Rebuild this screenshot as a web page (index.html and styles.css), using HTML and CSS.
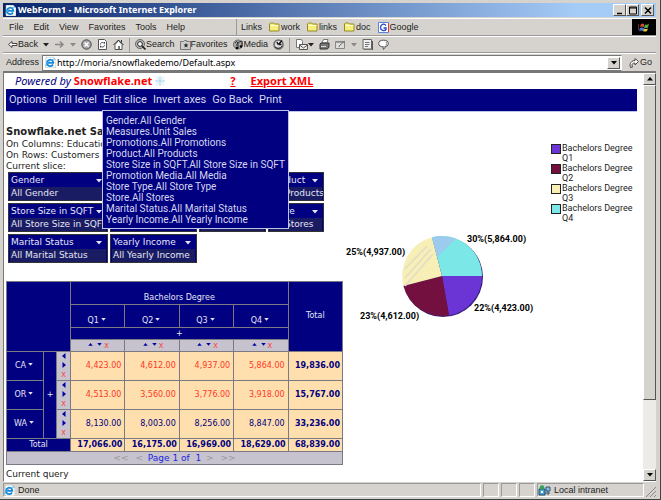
FILE: index.html
```html
<!DOCTYPE html>
<html lang="en">
<head>
<meta charset="utf-8">
<title>WebForm1 - Microsoft Internet Explorer</title>
<link rel="stylesheet" href="styles.css">
</head>
<body>
<svg class="defs" aria-hidden="true">
  <symbol id="ie" viewBox="0 0 11 11"><path d="M1 0h7l3 3v8H1z" fill="#fff" stroke="#9aa" stroke-width=".6"/><path d="M8 7.500A3.200 3.200 0 1 1 8.400 5.800H3" fill="none" stroke="#1688d8" stroke-width="1.700"/><path d="M1 9C0 7 6 2 10 2" fill="none" stroke="#48b0f0"/></symbol>
  <symbol id="folder" viewBox="0 0 11 10"><path d="M.5 1.500 1.500.5h3l1 1h4.500v7H.5z" fill="#f7ef7b" stroke="#948a29"/><path d="M1.500 3h8" stroke="#fffbd0"/></symbol>
  <symbol id="down" viewBox="0 0 6 4"><path d="M0 0h6L3 3.500z" fill="currentColor"/></symbol>
  <symbol id="up" viewBox="0 0 6 4"><path d="M0 3.500h6L3 0z" fill="currentColor"/></symbol>
  <symbol id="left" viewBox="0 0 4 6"><path d="M3.500 0v6L0 3z" fill="currentColor"/></symbol>
  <symbol id="right" viewBox="0 0 4 6"><path d="M.5 0v6L4 3z" fill="currentColor"/></symbol>
</svg>
<div class="window">
  <header class="titlebar">
    <svg class="icon"><use href="#ie"/></svg>
    <h1>WebForm1 - Microsoft Internet Explorer</h1>
    <button class="box" aria-label="Minimize"><svg viewBox="0 0 10 9"><path d="M2 7.500h5" stroke="#000" stroke-width="1.500"/></svg></button>
    <button class="box" aria-label="Maximize"><svg viewBox="0 0 10 9"><path d="M1.500 1h7v7h-7z M1.500 2h7" fill="none" stroke="#000"/></svg></button>
    <button class="box close" aria-label="Close"><svg viewBox="0 0 10 9"><path d="m2 1.500 6 6m0-6-6 6" stroke="#000" stroke-width="1.500"/></svg></button>
  </header>

  <div class="menubar">
    <nav class="menus"><button>File</button><button>Edit</button><button>View</button><button>Favorites</button><button>Tools</button><button>Help</button></nav>
    <div class="links"><span>Links</span>
      <a href="#"><svg class="icon"><use href="#folder"/></svg>work</a>
      <a href="#"><svg class="icon"><use href="#folder"/></svg>links</a>
      <a href="#"><svg class="icon"><use href="#folder"/></svg>doc</a>
      <a href="#"><svg class="icon" viewBox="0 0 11 11"><path d="M.5.5h10v10H.5z" fill="#fff" stroke="#5b83d8"/><path d="M10.500 1v9" stroke="#e33"/><path d="M8 3.500C6 1 2.500 2.500 2.500 5.500S6.500 9.500 8 7.500V6H5.500" fill="none" stroke="#2445c8" stroke-width="1.300"/></svg>Google</a>
    </div>
    <div class="throbber"><svg viewBox="0 0 12 11"><path d="M3 2q2-1 3 0v3q-2-1-4 0z" fill="#d84c34"/><path d="M7 2.500q2 1 4-1l-1 4q-2 1-4 0z" fill="#55a848"/><path d="M2 6q2-1 4 0L5 9q-2-1-4 0z" fill="#4979d8"/><path d="M6 6.500q2 1 4 0L9 9q-2 1-4 0z" fill="#e6c442"/><path d="M0 3h1M0 5h1M0 7h1" stroke="#c55"/></svg></div>
  </div>

  <div class="toolbar">
    <button><svg class="icon" viewBox="0 0 11 11"><path d="M5 2.500 1.500 5.500 5 8.500V6.500h5v-2H5z" fill="#fff" stroke="#444"/></svg>Back</button>
    <button class="drop" aria-label="Back history"><svg class="arrow"><use href="#down"/></svg></button>
    <button aria-label="Forward"><svg class="icon" viewBox="0 0 11 11"><path d="M1 5.500h8M6 2.500l3 3-3 3" fill="none" stroke="#888" stroke-width="1.400"/></svg></button>
    <button class="drop dim" aria-label="Forward history"><svg class="arrow"><use href="#down"/></svg></button>
    <button aria-label="Stop"><svg class="icon" viewBox="0 0 11 11"><circle cx="5.500" cy="5.500" r="4.700" fill="#aaa" stroke="#444"/><path d="m3.500 3.500 4 4m0-4-4 4" stroke="#fff" stroke-width="1.500"/></svg></button>
    <button aria-label="Refresh"><svg class="icon" viewBox="0 0 11 11"><path d="M1.500.5h6l2 2v8h-8z" fill="#fff" stroke="#555"/><path d="M3.500 5.500C3.500 3 6 3 7.500 4.500V3M7.500 6C7 8.500 5 8.500 3.500 7v1.500" fill="none" stroke="#444"/></svg></button>
    <button aria-label="Home"><svg class="icon" viewBox="0 0 11 11"><path d="M2 10.500V5.500L5.500 1.500 9 5.500v5z" fill="#fff" stroke="#555"/><path d="m.5 6 5-5 5 5M8.500 1v2.500" fill="none" stroke="#333"/><path d="M5 7h2v3H5z" fill="#777"/></svg></button>
    <i class="sep"></i>
    <button><svg class="icon" viewBox="0 0 11 11"><circle cx="5" cy="5" r="4.500" fill="#bbb" stroke="#666"/><circle cx="5" cy="5" r="2.400" fill="#fff" stroke="#222"/><path d="m7 7 3.500 3.500" stroke="#222" stroke-width="1.600"/></svg>Search</button>
    <button><svg class="icon" viewBox="0 0 11 11"><path d="M.5 2.500h3l1-1h2v1h4v8H.5z" fill="#ccc" stroke="#777"/><path d="m6 4 .7 1.500h1.800L7 6.700l.7 1.800L6 7.500 4.300 8.500 5 6.700 3.500 5.500h1.800z" fill="#222"/></svg>Favorites</button>
    <button><svg class="icon" viewBox="0 0 11 11"><circle cx="5" cy="5.500" r="4.500" fill="#aaa" stroke="#666"/><path d="M2 4q2-3 3 0-2 1-1 3M5 9V3.500l4-1.500v5" fill="none" stroke="#333"/><circle cx="4" cy="9" r="1.300"/><circle cx="8" cy="7.500" r="1.300"/></svg>Media</button>
    <button aria-label="History"><svg class="icon" viewBox="0 0 11 11"><circle cx="5.500" cy="5.500" r="4.500" fill="#ddd" stroke="#666" stroke-width="1.500"/><path d="M5.500 5.500 9 1.500M5.500 5.500h3M5 5.500 4 3" stroke="#111" stroke-width="1.400"/><path d="M2 8q4 3 7-1" fill="none" stroke="#222"/></svg></button>
    <i class="sep"></i>
    <button aria-label="Mail"><svg class="icon wide" viewBox="0 0 13 11"><path d="M1.500.5h5l1 2v6h-6z" fill="#fff" stroke="#777"/><path d="M4.500 5.500h8v5h-8z" fill="#eee" stroke="#555"/><path d="m4.500 6 4 3 4-3" fill="none" stroke="#555"/></svg><svg class="arrow"><use href="#down"/></svg></button>
    <button aria-label="Print"><svg class="icon" viewBox="0 0 11 11"><path d="m3 4 1.500-3.500H9L8 4z" fill="#fff" stroke="#777"/><path d="M1 5l1-1h8v4L8.500 10H1z" fill="#777" stroke="#333"/><path d="M2 7.500h5" stroke="#ddd"/></svg></button>
    <button class="dim" aria-label="Edit"><svg class="icon" viewBox="0 0 11 11"><path d="M.5 2.500h9v7h-9z" fill="#ddd" stroke="#888"/><path d="M1 3h9" stroke="#888" stroke-width="1.500"/><path d="m4 8 1-2 5-4" fill="none" stroke="#777"/></svg></button>
    <button class="drop dim" aria-label="Edit with"><svg class="arrow"><use href="#down"/></svg></button>
    <button aria-label="Discuss"><svg class="icon" viewBox="0 0 11 11"><path d="M1 .5h8.500v9.500H1z" fill="#eee" stroke="#666"/><path d="M10.500 2v9H2" fill="none" stroke="#555"/><path d="M3 3.500h4.500M3 5.500h4.500M3 7.500h3" stroke="#777"/></svg></button>
    <button aria-label="Messenger"><svg class="icon" viewBox="0 0 11 11"><ellipse cx="5.500" cy="4.500" rx="4.800" ry="3.300" fill="#fff" stroke="#555"/><path d="m5 8 .5 2.500L8 7" fill="#fff" stroke="#555"/><path d="M8 2.500q1.500 2 0 4" fill="none" stroke="#888"/></svg></button>
  </div>

  <form class="address">
    <label for="url">Address</label>
    <div class="field"><svg class="icon"><use href="#ie"/></svg><input id="url" value="http://moria/snowflakedemo/Default.aspx"><button type="button" class="box" aria-label="Show addresses"><svg class="arrow"><use href="#down"/></svg></button></div>
    <button type="button" class="go"><svg class="icon" viewBox="0 0 11 11"><path d="M1.500 10.500C0 6 3 3.500 6 3.500V1.500l3.500 3L6 8V6C4 6 2 7 3.500 10z" fill="#fff" stroke="#444"/></svg>Go</button>
  </form>

  <div class="viewport">
    <main class="page">
      <div class="brand"><em>Powered by</em> <strong>Snowflake.net</strong><svg class="flake" viewBox="0 0 11 11"><path d="M5.500 0v11M0 5.500h11M1.500 1.500l8 8m0-8-8 8M4 1l1.500 1.500L7 1M4 10l1.500-1.500L7 10M1 4l1.500 1.500L1 7M10 4 8.500 5.500 10 7" fill="none" stroke="#a5d3e7" stroke-width=".8"/></svg>
        <a class="help" href="#">?</a><a href="#">Export XML</a></div>
      <nav class="nav">
        <button>Options</button><button>Drill level</button>
        <div class="open"><button aria-expanded="true">Edit slice</button>
          <ul class="menu"><li>Gender.All Gender</li><li>Measures.Unit Sales</li><li>Promotions.All Promotions</li><li>Product.All Products</li><li>Store Size in SQFT.All Store Size in SQFT</li><li>Promotion Media.All Media</li><li>Store Type.All Store Type</li><li>Store.All Stores</li><li>Marital Status.All Marital Status</li><li>Yearly Income.All Yearly Income</li></ul></div>
        <button>Invert axes</button><button>Go Back</button><button>Print</button>
      </nav>
      <div class="report">
        <section class="data">
          <h2>Snowflake.net Sa</h2>
          <p>On Columns: Educatio</p><p>On Rows: Customers</p><p>Current slice:</p>
          <div class="slices">
            <div class="slice"><button>Gender<svg class="arrow"><use href="#down"/></svg></button><span>All Gender</span></div>
            <div class="slice"></div>
            <div class="slice"></div>
            <div class="slice"><button>Product<svg class="arrow"><use href="#down"/></svg></button><span>All Products</span></div>
            <div class="slice"><button>Store Size in SQFT<svg class="arrow"><use href="#down"/></svg></button><span>All Store Size in SQFT</span></div>
            <div class="slice"></div>
            <div class="slice"><button>Store Type<svg class="arrow"><use href="#down"/></svg></button><span>All Store Type</span></div>
            <div class="slice"><button>Store<svg class="arrow"><use href="#down"/></svg></button><span>All Stores</span></div>
            <div class="slice"><button>Marital Status<svg class="arrow"><use href="#down"/></svg></button><span>All Marital Status</span></div>
            <div class="slice"><button>Yearly Income<svg class="arrow"><use href="#down"/></svg></button><span>All Yearly Income</span></div>
          </div>
          <table class="pivot">
            <colgroup><col class="c-name"><col class="c-plus"><col class="c-move"><col span="5"></colgroup>
            <thead>
              <tr class="level"><th colspan="3" rowspan="4"></th><th colspan="4">Bachelors Degree</th><th rowspan="4" class="total">Total</th></tr>
              <tr class="level"><th>Q1<svg class="arrow"><use href="#down"/></svg></th><th>Q2<svg class="arrow"><use href="#down"/></svg></th><th>Q3<svg class="arrow"><use href="#down"/></svg></th><th>Q4<svg class="arrow"><use href="#down"/></svg></th></tr>
              <tr class="short"><th colspan="4">+</th></tr>
              <tr class="short tools"><td><svg class="arrow"><use href="#up"/></svg><svg class="arrow"><use href="#down"/></svg><b>x</b></td><td><svg class="arrow"><use href="#up"/></svg><svg class="arrow"><use href="#down"/></svg><b>x</b></td><td><svg class="arrow"><use href="#up"/></svg><svg class="arrow"><use href="#down"/></svg><b>x</b></td><td><svg class="arrow"><use href="#up"/></svg><svg class="arrow"><use href="#down"/></svg><b>x</b></td></tr>
            </thead>
            <tbody>
              <tr class="red"><th>CA<svg class="arrow"><use href="#down"/></svg></th><th rowspan="3">+</th><td class="move"><svg><use href="#left"/></svg><svg><use href="#right"/></svg><b>x</b></td><td>4,423.00</td><td>4,612.00</td><td>4,937.00</td><td>5,864.00</td><td class="sum">19,836.00</td></tr>
              <tr class="red"><th>OR<svg class="arrow"><use href="#down"/></svg></th><td class="move"><svg><use href="#left"/></svg><svg><use href="#right"/></svg><b>x</b></td><td>4,513.00</td><td>3,560.00</td><td>3,776.00</td><td>3,918.00</td><td class="sum">15,767.00</td></tr>
              <tr><th>WA<svg class="arrow"><use href="#down"/></svg></th><td class="move"><svg><use href="#left"/></svg><svg><use href="#right"/></svg><b>x</b></td><td>8,130.00</td><td>8,003.00</td><td>8,256.00</td><td>8,847.00</td><td class="sum">33,236.00</td></tr>
            </tbody>
            <tfoot>
              <tr><th colspan="3">Total</th><td class="sum">17,066.00</td><td class="sum">16,175.00</td><td class="sum">16,969.00</td><td class="sum">18,629.00</td><td class="sum">68,839.00</td></tr>
              <tr><td class="pager" colspan="8"><i>&lt;&lt;</i> <i>&lt;</i> Page 1 of&nbsp; 1 <i>&gt;</i> <i>&gt;&gt;</i></td></tr>
            </tfoot>
          </table>
          <p class="query">Current query</p>
        </section>
        <figure class="chart">
          <svg viewBox="0 0 180 100" role="img" aria-label="Sales by quarter">
            <circle cx="97" cy="47" r="40" fill="#342078"/>
            <path d="M96 46h40A40 40 0 0 1 103 85.400z" fill="#6b35d6"/>
            <path d="M96 46 103 85.400A40 40 0 0 1 57.400 56z" fill="#731040"/>
            <path d="M96 46 57.400 56A40 40 0 0 1 86 7.300z" fill="#f7efb5"/>
            <path d="M96 46 86 7.300A40 40 0 0 1 136 46z" fill="#7be7e7"/>
            <path d="M91 27 86 7.300A40 40 0 0 1 110 8.500z" fill="#9ccbee"/>
            <path d="m59 39 22-23m-22 32 26-29m-26 37 28-32" stroke="#e2dcc9" stroke-width="1.500"/>
            <text x="121" y="12">30%(5,864.00)</text><text x="0" y="25">25%(4,937.00)</text><text x="14" y="89">23%(4,612.00)</text><text x="128" y="81">22%(4,423.00)</text>
          </svg>
          <ul class="legend"><li class="q1">Bachelors Degree Q1</li><li class="q2">Bachelors Degree Q2</li><li class="q3">Bachelors Degree Q3</li><li class="q4">Bachelors Degree Q4</li></ul>
        </figure>
      </div>
    </main>
    <div class="scroll"><button class="box" aria-label="Scroll up"><svg class="arrow"><use href="#up"/></svg></button><i class="thumb"></i><i class="track"></i><button class="box" aria-label="Scroll down"><svg class="arrow"><use href="#down"/></svg></button></div>
  </div>

  <footer class="status">
    <span class="done"><svg class="icon"><use href="#ie"/></svg>Done</span><span></span><span></span><span></span>
    <span class="zone"><svg class="icon wide" viewBox="0 0 13 11"><path d="M1 4h6v6H1z" fill="#4ba9da" stroke="#246"/><path d="M8 2h4v4H8zM7 8h5M10 6v4" fill="#7bc2ee" stroke="#357"/><circle cx="4" cy="2.500" r="2.300" fill="#35a35a"/><path d="M3 6h2v2H3z" fill="#fff"/></svg>Local intranet</span>
    <svg class="grip" viewBox="0 0 10 10"><path d="m0 10 10-10M4 10l6-6M8 10l2-2" stroke="#888"/></svg>
  </footer>
</div>
</body>
</html>
```
FILE: styles.css
```css
* { box-sizing: border-box; }
body { margin: 0; background: #d6d3ce; font: 9px/11px "Liberation Sans", sans-serif; color: #222; }
button { border: 0; padding: 0; background: none; color: inherit; font: inherit; display: flex; align-items: center; }
a { color: inherit; text-decoration: none; }
h1, h2, p, ul, figure { margin: 0; padding: 0; list-style: none; }
.defs { display: none; }
.icon { width: 11px; height: 11px; flex: none; }
.wide { width: 13px; }
.arrow { width: 6px; height: 4px; flex: none; }
.window { height: 100vh; display: flex; flex-direction: column; padding: 3px 4px 2px 3px; border-right: 1px solid #424142; border-bottom: 1px solid #424142; overflow: hidden; }
.titlebar { display: flex; align-items: center; height: 14px; flex: none; padding: 0 2px; background: linear-gradient(90deg, #08246b, #a5cbf7 88%); color: #fff; }
.titlebar h1 { flex: 1; margin-left: 2px; font: bold 9px/14px "Noto Sans", sans-serif; }
.box { justify-content: center; width: 13px; height: 12px; flex: none; background: #d6d3ce; border: 1px solid; border-color: #fff #555 #555 #fff; color: #000; }
.titlebar .box svg { width: 10px; height: 9px; }
.close { margin-left: 2px; }
.menubar { display: flex; height: 18px; flex: none; margin-top: 1px; border-top: 1px solid #fff; border-bottom: 1px solid #999; align-items: center; }
.menus, .links { display: flex; align-items: center; gap: 10px; padding-left: 6px; }
.menus { flex: 0 0 233px; }
.links { flex: 1; align-self: stretch; gap: 7px; padding-left: 4px; border-left: 1px solid #999; }
.links a { display: flex; align-items: center; gap: 1px; }
.throbber { width: 24px; height: 16px; background: #000; display: grid; place-items: center; }
.throbber svg { width: 12px; height: 11px; }
.toolbar { display: flex; align-items: center; height: 17px; flex: none; padding-left: 4px; gap: 5px; border-top: 1px solid #fff; border-bottom: 1px solid #999; }
.toolbar .sep { width: 1px; height: 14px; background: #999; }
.toolbar .dim { color: #888; }
.address { display: flex; align-items: center; height: 18px; flex: none; padding-left: 3px; border-top: 1px solid #fff; }
.field { flex: 1; display: flex; align-items: center; height: 16px; margin: 0 7px 0 3px; padding: 0 1px 0 2px; background: #fff; border: 1px solid #777; border-right-color: #fff; }
.field input { flex: 1; min-width: 0; border: 0; padding: 0; margin-left: 1px; font: 9px/13px "Noto Sans", sans-serif; outline: 0; background: none; }
.go { width: 27px; }
.viewport { flex: 1; min-height: 0; display: flex; background: #fff; border: 1px solid #777; border-top-width: 2px; border-right: 0; border-bottom-color: #fff; }
.page { flex: 1; min-width: 0; padding: 0 6px 0 2px; font: 9px/11px "DejaVu Sans", sans-serif; overflow: hidden; }
.brand { height: 16px; padding-left: 9px; display: flex; align-items: center; gap: 3px; font: 11px/16px "Noto Sans", sans-serif; color: #000080; }
.brand strong, .brand a { color: #f00; }
.brand a { font-weight: bold; text-decoration: underline; }
.flake { width: 10px; height: 10px; }
.brand .help { margin: 0 12px 0 62px; }
.nav { display: flex; gap: 6px; height: 23px; padding: 0 3px; background: #000080; border-bottom: 1px solid #bdc3e7; color: #d6d7ef; font: 11px/14px Roboto, sans-serif; align-items: center; }
.open { position: relative; }
.menu { position: absolute; left: -1px; top: 17px; z-index: 2; white-space: nowrap; padding: 4px 3px 3px; background: #000080; border: 1px solid #bdc3e7; font: 10px/11px Roboto, sans-serif; }
.report { display: flex; }
.data { flex: 0 0 337px; padding-top: 13px; }
.data h2 { font: bold 10px/14px "DejaVu Sans", sans-serif; }
.slices { display: grid; grid-template-columns: 100px 87px 67px 56px; gap: 2px; padding: 0 2px; }
.slice { height: 29px; padding: 1px; background: #000080; border: 1px solid #333; color: #e5e5f5; font: 9px/13px "DejaVu Sans", sans-serif; white-space: nowrap; overflow: hidden; }
.slice button { width: 100%; justify-content: space-between; padding: 0 4px 0 1px; }
.slice span { display: block; padding-left: 1px; background: #191c62; }
.pivot { width: 100%; margin-top: 18px; border-collapse: collapse; table-layout: fixed; font: 8px/10px "DejaVu Sans", sans-serif; color: #000080; }
.pivot td, .pivot th { padding: 0 3px; border: 1px solid #7b7984; }
.pivot th { background: #000080; color: #e5e5f5; font-weight: normal; padding: 0; }
.pivot td { background: #ffdfad; text-align: right; }
.c-name { width: 37px; } .c-plus { width: 13px; } .c-move { width: 14px; }
.pivot tbody tr { height: 29px; }
.pivot tfoot tr { height: 13px; }
.level { height: 23px; }
.pivot .level th { vertical-align: bottom; padding-bottom: 1px; }
.pivot .level .total { vertical-align: middle; }
.short { height: 12px; }
.pivot .arrow { width: 5px; height: 3px; margin: 0 2px 2px; }
.pivot .tools td, .pivot .move, .pivot .pager { background: #c6c3ce; text-align: center; padding: 0; color: #0000a5; }
.pivot b { color: #f44; font-weight: normal; }
.move svg { display: block; width: 4px; height: 6px; margin: 0 auto 3px; }
.pivot .move { line-height: 8px; }
.red td { color: #ff3829; }
.pivot .sum { color: #000080; font-weight: bold; padding: 0 2px; }
.pivot .pager { color: #2424e0; font-size: 9px; }
.pager i { color: #999; font-style: normal; margin: 0 2px; }
.query { margin-top: 4px; }
.chart { flex: 1; display: flex; align-items: flex-start; justify-content: space-between; padding-top: 31px; }
.chart svg { width: 180px; height: 100px; margin: 87px 0 0 3px; overflow: visible; }
.chart text { font: bold 9px Roboto, sans-serif; }
.legend { width: 86px; font: 9px/10px Roboto, sans-serif; }
.legend li { position: relative; padding: 0 4px 0 11px; }
.legend li::before { content: ""; position: absolute; left: 0; top: 1px; width: 8px; height: 8px; border: 1px solid #222; background: #6b35d6; }
.legend .q2::before { background: #731040; }
.legend .q3::before { background: #f7efb5; }
.legend .q4::before { background: #7be7e7; }
.scroll { width: 13px; flex: none; display: flex; flex-direction: column; background: #ecebe6; }
.thumb { flex: 315; background: #d6d3ce; border: 1px solid; border-color: #fff #555 #555 #fff; }
.track { flex: 69; }
.status { display: flex; flex: none; height: 15px; gap: 2px; padding-top: 1px; }
.status span { display: flex; align-items: center; gap: 3px; width: 16px; border: 1px solid; border-color: #999 #fff #fff #999; }
.status .done { flex: 1; }
.status .zone { width: 107px; }
.grip { width: 10px; height: 10px; align-self: flex-end; }
```
